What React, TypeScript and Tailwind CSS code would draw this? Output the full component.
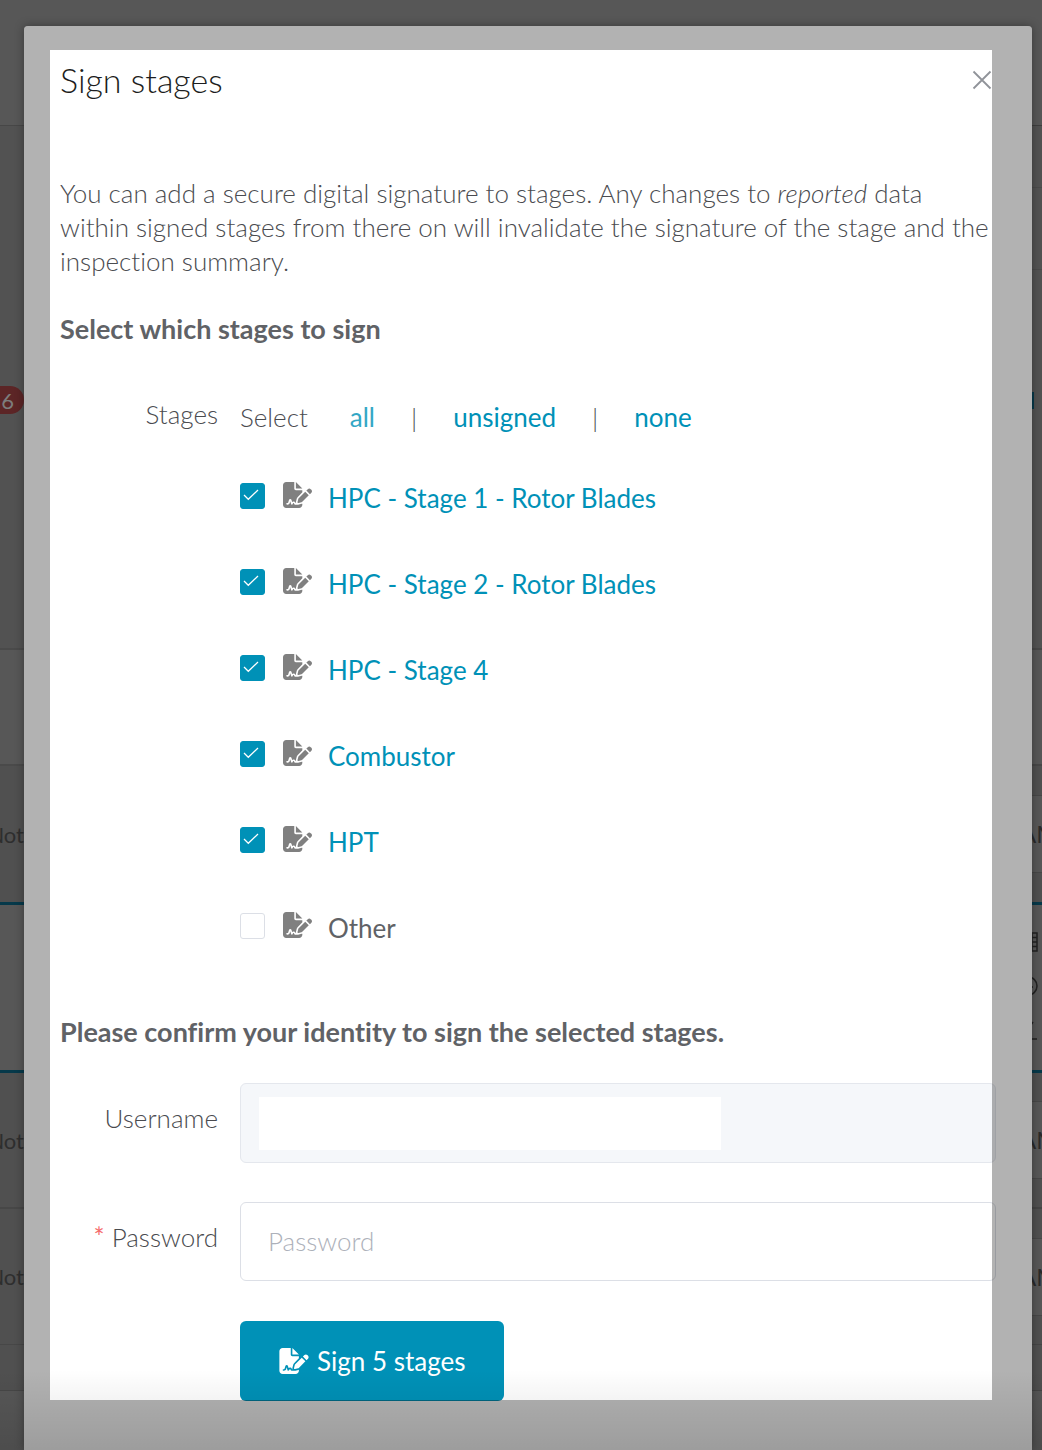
import { useState } from "react";
import { FaFileSignature } from "react-icons/fa6";

const STAGES = [
  "HPC - Stage 1 - Rotor Blades",
  "HPC - Stage 2 - Rotor Blades",
  "HPC - Stage 4",
  "Combustor",
  "HPT",
  "Other",
];

// Slice of the dimmed page visible left of the dialog
function PageLeft() {
  return (
    <aside className="flex w-6 shrink-0 flex-col overflow-hidden bg-[#575757] text-[22px] text-[#2e2e2e]">
      <div className="h-[126px] border-b border-[#474747]" />
      <div className="flex h-[522px] items-start justify-end bg-[#525252] pt-[260px]">
        <span className="flex h-7 w-12 shrink-0 items-center justify-end rounded-full bg-[#5c2526] pr-[10px] text-[#7d7d7d]">
          6
        </span>
      </div>
      <div className="h-[118px] border-y-2 border-[#4a4a4a]" />
      <div className="flex h-[136px] items-center justify-end bg-[#505050]">Not</div>
      <div className="h-[171px] border-y-[3px] border-[#06394a]" />
      <div className="flex h-[136px] items-center justify-end border-b-2 border-[#474747] bg-[#505050]">Not</div>
      <div className="flex h-[136px] items-center justify-end border-b border-[#474747] bg-[#505050]">Not</div>
      <div className="h-[46px] border-b border-[#474747] bg-[#505050]" />
      <div className="grow" />
    </aside>
  );
}

function TimeCell() {
  return (
    <div className="flex h-[78px] items-center border-y border-[#474747] bg-[#575757]">
      <span className="-ml-3">AM</span>
    </div>
  );
}

// Slice of the dimmed page visible right of the dialog
function PageRight() {
  return (
    <aside className="flex w-[10px] shrink-0 flex-col overflow-hidden bg-[#575757] text-2xl text-[#2a2a2a]">
      <div className="h-[126px] border-b border-[#3f3f3f]" />
      <div className="h-[62px] border-b border-[#4a4a4a] bg-[#525252]" />
      <div className="h-[82px] border-b border-[#4a4a4a] bg-[#525252]" />
      <div className="flex h-[378px] bg-[#525252] pt-[122px]">
        <div className="h-[17px] w-[2px] bg-[#06394a]" />
      </div>
      <div className="h-[118px] border-y-2 border-[#474747]" />
      <div className="flex h-[136px] flex-col justify-center bg-[#505050]">
        <TimeCell />
      </div>
      <div className="flex h-[171px] flex-col items-end gap-6 border-y-[3px] border-[#06394a] pt-[27px] pr-1">
        <svg className="h-5 w-5 shrink-0" viewBox="0 0 20 20" fill="none" stroke="#222" strokeWidth="1.5">
          <path d="M1 1h18v18H1zM1 5.5h18M1 10h18M1 14.5h18M14 1v18" />
        </svg>
        <svg className="h-5 w-5 shrink-0" viewBox="0 0 20 20" fill="none" stroke="#222" strokeWidth="1.5">
          <circle cx="10" cy="10" r="9" />
          <path d="M10 4v7h5" />
        </svg>
        <svg className="h-5 w-5 shrink-0" viewBox="0 0 20 20" fill="none" stroke="#222" strokeWidth="1.5">
          <path d="M1 19h18M15 2 7 13" />
        </svg>
      </div>
      <div className="flex h-[136px] flex-col justify-center border-b-2 border-[#454545] bg-[#505050]">
        <TimeCell />
      </div>
      <div className="flex h-[136px] flex-col justify-center border-b border-[#454545] bg-[#505050]">
        <TimeCell />
      </div>
      <div className="h-[46px] border-b border-[#454545] bg-[#505050]" />
      <div className="grow" />
    </aside>
  );
}

function CheckMark() {
  return (
    <svg
      className="pointer-events-none absolute inset-0 h-[26px] w-[25px]"
      viewBox="0 0 25 26"
      fill="none"
      stroke="#fff"
      strokeWidth="1.3"
    >
      <path d="M4 12 8.3 16.3 18 7" />
    </svg>
  );
}

export default function App() {
  const [selected, setSelected] = useState<string[]>(STAGES.slice(0, 5));

  const toggle = (stage: string) =>
    setSelected((prev) => (prev.includes(stage) ? prev.filter((s) => s !== stage) : [...prev, stage]));

  return (
    <div className="relative flex min-h-screen bg-[#575757] font-['Lato','Open_Sans',sans-serif] [font-variant-ligatures:none]">
      <PageLeft />

      <main className="relative z-10 mt-[26px] min-w-0 grow rounded-t bg-white px-9 pb-[49px] text-[26px] leading-[34px] font-light text-[#4a4b4f] shadow-[0_0_10px_rgba(0,0,0,0.35)]">
        <header className="flex items-center justify-between pt-[34px]">
          <h1 className="text-[34px] leading-10 text-[#1c1d20]">Sign stages</h1>
          <button type="button" aria-label="Close" className="mr-1">
            <svg className="h-5 w-5" viewBox="0 0 20 20" fill="none" stroke="#909399" strokeWidth="1.8">
              <path d="M1.5 1.5l17 17M18.5 1.5l-17 17" />
            </svg>
          </button>
        </header>

        <p className="mt-[76px]">
          You can add a secure digital signature to stages. Any changes to <em>reported</em> data within signed stages
          from there on will invalidate the signature of the stage and the inspection summary.
        </p>
        <h2 className="mt-[34px] text-[27px] font-bold text-[#606266]">Select which stages to sign</h2>

        <div className="mt-[51px] grid grid-cols-[158px_1fr] gap-x-[22px]">
          <span className="text-right">Stages</span>
          <div className="pt-[3px]">
            <div className="flex">
              <span>Select</span>
              <button type="button" className="ml-[42px] font-normal text-[#33a7c5]" onClick={() => setSelected(STAGES)}>
                all
              </button>
              <span className="mx-9">|</span>
              <button
                type="button"
                className="font-normal text-[#0091b7]"
                onClick={() => setSelected(STAGES.slice(0, 5))}
              >
                unsigned
              </button>
              <span className="mx-9">|</span>
              <button type="button" className="font-normal text-[#0091b7]" onClick={() => setSelected([])}>
                none
              </button>
            </div>

            <ul className="mt-[19px] font-normal">
              {STAGES.map((stage) => {
                const checked = selected.includes(stage);
                return (
                  <li key={stage} className="flex h-[86px] items-center">
                    <label className="flex items-center">
                      <span className="relative h-[26px] w-[25px]">
                        <input
                          type="checkbox"
                          checked={checked}
                          onChange={() => toggle(stage)}
                          className="block h-[26px] w-[25px] appearance-none rounded-[3px] border border-[#dcdfe6] bg-white checked:border-[#0091b7] checked:bg-[#0091b7]"
                        />
                        {checked && <CheckMark />}
                      </span>
                      <FaFileSignature className="mb-[2px] ml-[18px] h-[26px] w-[29px] text-[#808080]" />
                      <span className={checked ? "mt-1 ml-4 text-[#0091b7]" : "mt-1 ml-4 text-[#606266]"}>{stage}</span>
                    </label>
                  </li>
                );
              })}
            </ul>
          </div>
        </div>

        <h2 className="mt-[46px] text-[27px] font-bold text-[#606266]">
          Please confirm your identity to sign the selected stages.
        </h2>

        <form
          className="mt-[34px] grid grid-cols-[158px_1fr] gap-x-[22px] gap-y-[39px]"
          onSubmit={(e) => e.preventDefault()}
        >
          <label htmlFor="username" className="pt-[18px] text-right">
            Username
          </label>
          <div className="flex h-20 items-center rounded-md border border-[#e4e7ed] bg-[#f5f7fa] px-[18px]">
            <input id="username" disabled className="h-[53px] w-full max-w-[462px] bg-white" />
          </div>

          <label htmlFor="password" className="pt-[18px] text-right">
            <span className="font-normal text-[#f56c6c]">*</span> Password
          </label>
          <input
            id="password"
            type="password"
            placeholder="Password"
            className="h-[79px] w-full rounded-md border border-[#dcdfe6] px-[27px] pb-[2px] placeholder:text-[#adb1ba]"
          />

          <button
            type="submit"
            className="col-start-2 mt-px flex h-20 items-center justify-self-start rounded-md bg-[#0091b7] px-[39px] font-normal text-white"
          >
            <FaFileSignature className="mr-2 h-[26px] w-[30px]" />
            Sign {selected.length} stages
          </button>
        </form>

        {/* spotlight frame around the form */}
        <div className="pointer-events-none absolute inset-0 rounded-t border-t-[24px] border-r-[40px] border-b-[50px] border-l-[26px] border-black/30" />
      </main>

      <PageRight />
      <div className="pointer-events-none absolute inset-x-0 bottom-0 z-20 h-20 bg-linear-to-b from-transparent to-black/12" />
    </div>
  );
}
